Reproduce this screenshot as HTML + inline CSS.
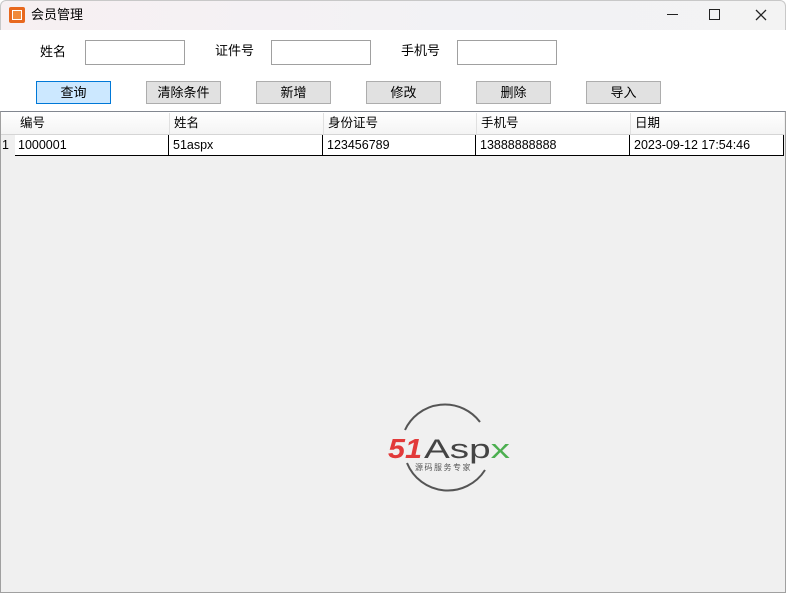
<!DOCTYPE html>
<html><head><meta charset="utf-8"><style>
*{margin:0;padding:0;box-sizing:border-box}
body{width:786px;height:593px;overflow:hidden;background:#fff;font-family:"Liberation Sans","Noto Sans CJK SC",sans-serif;font-size:12px;color:#000;position:relative}
.abs{position:absolute}
#title{left:0;top:0;width:786px;height:30px;background:linear-gradient(90deg,#f7f0f2,#f2f2f5 60%,#f3f3f3);border:1px solid #c8c8c8;border-bottom:none;border-radius:6px 6px 0 0}
.lbl{font-size:13px}
.inp{width:100px;height:25px;border:1px solid #a0a0a0;background:#fff}
.btn{width:75px;height:23px;border:1px solid #adadad;background:#e1e1e1;text-align:center;line-height:21px;font-size:13px}
#grid{left:0;top:111px;width:786px;height:482px;background:#f0f0f0;border:1px solid #a0a0a0;border-top:1px solid #828790}
.c{position:absolute;height:21px;line-height:20px;padding-left:4px;font-size:12.5px;white-space:nowrap}
</style></head><body>
<div id="title" class="abs"></div>
<div class="abs" style="left:9px;top:7px;width:16px;height:16px;background:#e8681e;border-radius:2px"><div style="position:absolute;left:3px;top:3px;width:10px;height:10px;border:1.5px solid #fff;background:#f08a3a"></div></div>
<div class="abs" style="left:31px;top:4px;font-size:13px">会员管理</div>
<div class="abs" style="left:709px;top:9px;width:11px;height:11px;border:1.3px solid #222"></div>
<div class="abs" style="left:667px;top:14px;width:11px;height:1.3px;background:#222"></div>
<svg class="abs" style="left:755px;top:9px" width="12" height="12"><path d="M1 1L11 11M11 1L1 11" stroke="#222" stroke-width="1.3"/></svg>

<div class="abs lbl" style="left:40px;top:41px">姓名</div>
<div class="abs inp" style="left:85px;top:40px"></div>
<div class="abs lbl" style="left:215px;top:40px">证件号</div>
<div class="abs inp" style="left:271px;top:40px"></div>
<div class="abs lbl" style="left:401px;top:40px">手机号</div>
<div class="abs inp" style="left:457px;top:40px"></div>

<div class="abs btn" style="left:36px;top:81px;background:#cce8ff;border-color:#0078d7">查询</div>
<div class="abs btn" style="left:146px;top:81px">清除条件</div>
<div class="abs btn" style="left:256px;top:81px">新增</div>
<div class="abs btn" style="left:366px;top:81px">修改</div>
<div class="abs btn" style="left:476px;top:81px">删除</div>
<div class="abs btn" style="left:586px;top:81px">导入</div>

<div id="grid" class="abs"></div>
<div class="abs" style="left:1px;top:112px;width:783px;height:23px;background:linear-gradient(#fff,#f4f4f4);border-bottom:1px solid #d5d5d5"></div>
<div class="abs" style="left:15px;top:135px;width:769px;height:21px;background:#fff;border-bottom:1px solid #000;border-right:1px solid #000"></div>
<div class="c" style="left:16px;top:113px">编号</div>
<div class="c" style="left:169px;top:113px;border-left:1px solid #e0e0e0">姓名</div>
<div class="c" style="left:323px;top:113px;border-left:1px solid #e0e0e0">身份证号</div>
<div class="c" style="left:476px;top:113px;border-left:1px solid #e0e0e0">手机号</div>
<div class="c" style="left:630px;top:113px;border-left:1px solid #e0e0e0">日期</div>
<div class="c" style="left:2px;top:135px;padding:0">1</div>
<div class="c" style="left:14px;top:135px">1000001</div>
<div class="c" style="left:168px;top:135px;border-left:1px solid #000">51aspx</div>
<div class="c" style="left:322px;top:135px;border-left:1px solid #000">123456789</div>
<div class="c" style="left:475px;top:135px;border-left:1px solid #000">13888888888</div>
<div class="c" style="left:629px;top:135px;border-left:1px solid #000">2023-09-12 17:54:46</div>

<svg class="abs" style="left:385px;top:400px" width="130" height="96">
<path d="M95 22 A44 44 0 0 0 20 30" fill="none" stroke="#555" stroke-width="2"/>
<path d="M22 63 A44 44 0 0 0 100 70" fill="none" stroke="#555" stroke-width="2"/>
<text x="3" y="58" font-family="Liberation Sans" font-weight="bold" font-style="italic" font-size="28" fill="#e23a3a" textLength="34" lengthAdjust="spacingAndGlyphs">51</text>
<text x="39" y="58" font-family="Liberation Sans" font-size="27" fill="#444" textLength="86" lengthAdjust="spacingAndGlyphs">Asp<tspan fill="#4caf50">x</tspan></text>
<text x="30" y="70" font-family="Noto Sans CJK SC" font-size="8" fill="#555" letter-spacing="1.5">源码服务专家</text>
</svg>
</body></html>
